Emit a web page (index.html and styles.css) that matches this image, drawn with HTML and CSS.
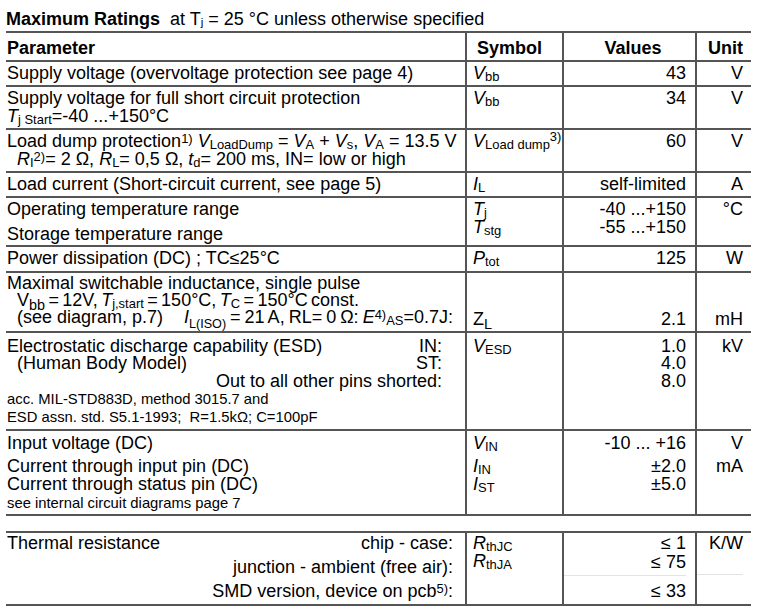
FILE: index.html
```html
<!DOCTYPE html>
<html>
<head>
<meta charset="utf-8">
<link rel="stylesheet" href="styles.css">
</head>
<body>
<div class="page">
  <div class="title"><b>Maximum Ratings</b>&nbsp; at T<sub>j</sub> = 25 °C unless otherwise specified</div>
  <div class="tbl">
    <div class="row hd">
      <div class="c p">Parameter</div>
      <div class="c s">Symbol</div>
      <div class="c v">Values</div>
      <div class="c u">Unit</div>
    </div>
    <div class="row r-25">
      <div class="c p">Supply voltage (overvoltage protection see page 4)</div>
      <div class="c s"><i>V</i><sub>bb</sub></div>
      <div class="c v">43</div>
      <div class="c u">V</div>
    </div>
    <div class="row r-43">
      <div class="c p">
        <div>Supply voltage for full short circuit protection</div>
        <div><i>T</i><sub>j Start</sub>=-40 ...+150°C</div>
      </div>
      <div class="c s"><i>V</i><sub>bb</sub></div>
      <div class="c v">34</div>
      <div class="c u">V</div>
    </div>
    <div class="row r-43">
      <div class="c p">
        <div>Load dump protection<sup>1)</sup> <i>V</i><sub>LoadDump</sub> = <i>V</i><sub>A</sub> + <i>V</i><sub>s</sub>, <i>V</i><sub>A</sub> = 13.5 V</div>
        <div class="ind"><i>R</i><sub>I</sub><sup>2)</sup>= 2 Ω, <i>R</i><sub>L</sub>= 0,5 Ω, <i>t</i><sub>d</sub>= 200 ms, IN= low or high</div>
      </div>
      <div class="c s"><i>V</i><sub>Load dump</sub><sup class="hi">3)</sup></div>
      <div class="c v">60</div>
      <div class="c u">V</div>
    </div>
    <div class="row r-25">
      <div class="c p">Load current (Short-circuit current, see page 5)</div>
      <div class="c s"><i>I</i><sub>L</sub></div>
      <div class="c v">self-limited</div>
      <div class="c u">A</div>
    </div>
    <div class="row r-49 temp">
      <div class="c p">
        <div>Operating temperature range</div>
        <div class="gap6">Storage temperature range</div>
      </div>
      <div class="c s">
        <div><i>T</i><sub>j</sub></div>
        <div><i>T</i><sub>stg</sub></div>
      </div>
      <div class="c v">
        <div>-40 ...+150</div>
        <div>-55 ...+150</div>
      </div>
      <div class="c u">°C</div>
    </div>
    <div class="row r-26">
      <div class="c p">Power dissipation (DC) ; TC≤25°C</div>
      <div class="c s"><i>P</i><sub>tot</sub></div>
      <div class="c v">125</div>
      <div class="c u">W</div>
    </div>
    <div class="row r-60 induct">
      <div class="c p">
        <div>Maximal switchable inductance, single pulse</div>
        <div class="ind tight">V<sub class="lo">bb</sub> = 12V, <i>T</i><sub>j,start</sub> = 150°C, <i>T</i><sub>C</sub> = 150°C const.</div>
        <div class="ind split"><span>(see diagram, p.7)</span><span class="tighter"><i>I</i><sub class="lo sm">L(ISO)</sub> = 21 A, RL= 0 Ω: <i>E</i><sup>4)</sup><sub>AS</sub>=0.7J:</span></div>
      </div>
      <div class="c s bottom">Z<sub class="lo">L</sub></div>
      <div class="c v bottom">2.1</div>
      <div class="c u bottom">mH</div>
    </div>
    <div class="row r-98 esd">
      <div class="c p">
        <div class="split">Electrostatic discharge capability (ESD)<span>IN:</span></div>
        <div class="split ind">(Human Body Model)<span>ST:</span></div>
        <div class="right">Out to all other pins shorted:</div>
        <div class="small first">acc. MIL-STD883D, method 3015.7 and</div>
        <div class="small">ESD assn. std. S5.1-1993;&nbsp; R=1.5kΩ; C=100pF</div>
      </div>
      <div class="c s"><i>V</i><sub>ESD</sub></div>
      <div class="c v">
        <div>1.0</div>
        <div>4.0</div>
        <div>8.0</div>
      </div>
      <div class="c u">kV</div>
    </div>
    <div class="row r-85 input">
      <div class="c p">
        <div>Input voltage (DC)</div>
        <div class="gap5">Current through input pin (DC)</div>
        <div>Current through status pin (DC)</div>
        <div class="small note">see internal circuit diagrams page 7</div>
      </div>
      <div class="c s">
        <div><i>V</i><sub>IN</sub></div>
        <div class="gap5"><i>I</i><sub>IN</sub></div>
        <div><i>I</i><sub>ST</sub></div>
      </div>
      <div class="c v">
        <div>-10 ... +16</div>
        <div class="gap5">±2.0</div>
        <div>±5.0</div>
      </div>
      <div class="c u">
        <div>V</div>
        <div class="gap5">mA</div>
      </div>
    </div>
    <div class="row r-17 gap">
      <div class="c p"></div>
      <div class="c s"></div>
      <div class="c v"></div>
      <div class="c u"></div>
    </div>
    <div class="row r-73 thermal">
      <div class="c p">
        <div class="split">Thermal resistance<span>chip - case:</span></div>
        <div class="right">junction - ambient (free air):</div>
        <div class="right">SMD version, device on pcb<sup>5)</sup>:</div>
      </div>
      <div class="c s">
        <div><i>R</i><sub>thJC</sub></div>
        <div><i>R</i><sub>thJA</sub></div>
      </div>
      <div class="c v">
        <div>≤ 1</div>
        <div class="faint">≤ 75</div>
        <div class="after">≤ 33</div>
      </div>
      <div class="c u">
        <div class="faint tall">K/W</div>
      </div>
    </div>
  </div>
</div>
</body>
</html>
```

FILE: styles.css
```css
* { box-sizing: border-box; }
body {
  margin: 0;
  background: #fff;
  color: #000;
  font-family: "Liberation Sans", Arial, sans-serif;
  font-size: 18px;
  line-height: 18px;
}
.page { width: 751px; padding: 10px 0 0 6px; }
.title { height: 18px; margin-bottom: 3px; white-space: nowrap; }
.title b { font-weight: bold; }
.tbl { border-top: 2px solid #555; }
.row {
  display: grid;
  grid-template-columns: 459px 97px 133px 56px;
  border-bottom: 2px solid #555;
}
.c { padding-top: 2px; white-space: nowrap; }
.s, .v, .u { border-left: 2px solid #555; }
.p { padding-left: 1px; }
.s { padding-left: 6px; }
.v { text-align: right; padding-right: 9px; }
.u { text-align: right; padding-right: 8px; }

.hd { height: 29px; }
.hd .c { font-weight: bold; padding-top: 6px; }
.hd .s { padding-left: 10px; }
.hd .v { text-align: center; padding-left: 7px; padding-right: 0; }

.r-17 { height: 17px; }
.r-25 { height: 25px; }
.r-26 { height: 26px; }
.r-43 { height: 43px; }
.r-49 { height: 49px; }
.r-60 { height: 60px; }
.r-73 { height: 73px; }
.r-85 { height: 85px; }
.r-98 { height: 98px; }
.gap .c { border-left: 0; }

sub, sup { font-size: 0.72em; line-height: 0; }
sub { vertical-align: -0.12em; }
sup { vertical-align: 0.32em; }
sup.hi { vertical-align: 0.5em; }
sub.lo { font-size: 0.8em; vertical-align: -0.28em; }
sub.lo.sm { font-size: 0.7em; vertical-align: -0.36em; }
.title sub { font-size: 0.65em; }

.ind { padding-left: 10px; }
.gap6 { margin-top: 7px; }
.gap5 { margin-top: 5.4px; }
.split { display: flex; justify-content: space-between; padding-right: 12px; }
.right { text-align: right; padding-right: 12px; }

.induct .p { padding-top: 2px; line-height: 17.2px; }
.induct .bottom { padding-top: 37px; }
.tight { word-spacing: -1.6px; }
.tighter { word-spacing: -1px; }

.esd .c { padding-top: 4.5px; line-height: 17.6px; }
.esd .split, .esd .right { padding-right: 23px; }
.small { font-size: 14.8px; line-height: 17.7px; }
.esd .small { line-height: 17.7px; }
.esd .small.first { margin-top: 1px; }

.input .c { padding-top: 3px; }
.input .note { margin-top: 1.5px; }

.thermal .c { padding-top: 1px; }
.thermal .p > div { line-height: 24px; }
.thermal .p > div:first-child { line-height: 18px; margin-bottom: 3px; }
.thermal .v > div { line-height: 18.5px; }
.faint { border-bottom: 1px solid #e4e4e4; padding-bottom: 4px; }
.tall { height: 41px; }
.after { margin-top: 6px; }
```
